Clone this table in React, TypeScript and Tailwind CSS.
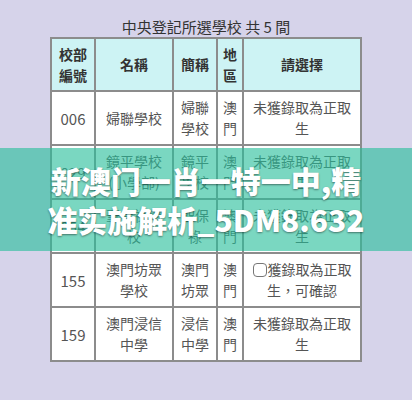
const rows = [
  { id: "006", name: "婦聯學校", short: "婦聯學校", area: "澳門", status: "未獲錄取為正取生", box: false },
  { id: "029", name: "鏡平學校(小學部)", short: "鏡平學校", area: "澳門", status: "未獲錄取為正取生", box: false },
  { id: "054", name: "聖保祿學校", short: "聖保祿", area: "澳門", status: "未獲錄取為正取生", box: false },
  { id: "155", name: "澳門坊眾學校", short: "澳門坊眾", area: "澳門", status: "獲錄取為正取生，可確認", box: true },
  { id: "159", name: "澳門浸信中學", short: "浸信中學", area: "澳門", status: "未獲錄取為正取生", box: false },
]

const cjk = "font-['Noto_Sans_CJK_TC','Noto_Sans',sans-serif]"

export default function App() {
  return (
    <div className={`relative h-[400px] w-[412px] overflow-hidden bg-[#d6d3ea] ${cjk}`}>
      {/* Title */}
      <div className="pt-[17px] text-center text-[15px] leading-[20px] text-[#333]">中央登記所選學校 共 5 間</div>

      {/* Table */}
      <table className="mx-auto w-[310px] table-fixed border-collapse text-center text-[14px] leading-[21px] text-[#555]">
        <thead>
          <tr className="h-[53px] bg-[#cdf3f4] font-bold text-[#333]">
            <th className="w-[44px] border-2 border-[#8c8c8c] px-[6px] font-bold">校部編號</th>
            <th className="w-[78px] border-2 border-[#8c8c8c] px-[6px] font-bold">名稱</th>
            <th className="w-[44px] border-2 border-[#8c8c8c] px-[6px] font-bold">簡稱</th>
            <th className="w-[26px] border-2 border-[#8c8c8c] px-[4px] font-bold">地區</th>
            <th className="w-[118px] border-2 border-[#8c8c8c] px-[6px] font-bold">請選擇</th>
          </tr>
        </thead>
        <tbody>
          {rows.map((r) => (
            <tr key={r.id} className="h-[54px] bg-white">
              <td className="border-2 border-[#8c8c8c] text-[15px]">{r.id}</td>
              <td className="border-2 border-[#8c8c8c] px-[6px]">{r.name}</td>
              <td className="border-2 border-[#8c8c8c] px-[6px]">{r.short}</td>
              <td className="border-2 border-[#8c8c8c] px-[4px]">{r.area}</td>
              <td className="border-2 border-[#8c8c8c] px-[5px]">
                {r.box && (
                  <span className="mr-px inline-block h-[14px] w-[14px] translate-y-[2px] rounded-[4px] border border-[#777] bg-white" />
                )}
                {r.status}
              </td>
            </tr>
          ))}
        </tbody>
      </table>

      {/* Overlay band */}
      <div className="absolute left-0 right-0 top-[148px] flex h-[103px] flex-col items-center justify-center bg-[rgba(40,190,155,0.62)]">
        <div className="font-['Noto_Sans_CJK_SC','Noto_Sans',sans-serif] text-[30px] font-black leading-[39px] text-white [text-shadow:0_1px_2px_rgba(0,0,0,0.45)]">
          <div className="text-center">新澳门一肖一特一中,精</div>
          <div className="text-center">准实施解析_5DM8.632</div>
        </div>
      </div>
    </div>
  )
}
